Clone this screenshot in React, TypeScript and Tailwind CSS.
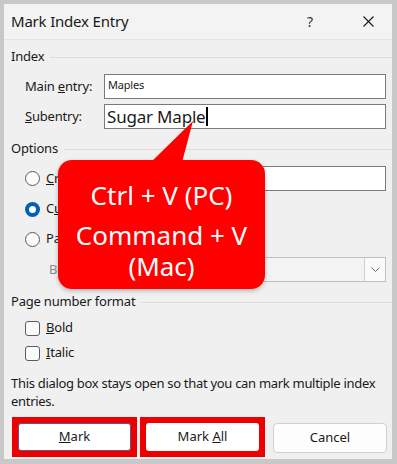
import React from 'react'

const font = { fontFamily: '"Noto Sans", "Open Sans", Arial, sans-serif' }

const GroupHeader = ({ label, className }: { label: string; className?: string }) => (
    <div className={`flex items-center h-[18px] pl-[7px] ${className ?? ''}`}>
        <span className="text-[13px] text-[#1a1a1a] pr-[6px] tracking-[-0.2px]">{label}</span>
        <div className="flex-1 h-px bg-[#dcdcdc]"></div>
    </div>
)

const Radio = ({ checked }: { checked?: boolean }) =>
    checked ? (
        <div className="w-[15px] h-[15px] rounded-full bg-[#005fb8] flex items-center justify-center shrink-0">
            <div className="w-[7px] h-[7px] rounded-full bg-white"></div>
        </div>
    ) : (
        <div className="w-[15px] h-[15px] rounded-full border border-[#5c5c5c] bg-[#fbfbfb] shrink-0"></div>
    )

const Checkbox = () => (
    <div className="w-[15px] h-[15px] rounded-[3px] border border-[#5c5c5c] bg-[#fbfbfb] shrink-0"></div>
)

const App = () => {
    return (
        <div className="w-[397px] h-[464px] bg-[#c8c8c8] pt-[4px] pl-[4px] pr-[5px] pb-[5px]" style={font}>
            <div className="relative h-full bg-[#f0f0f0] flex flex-col text-[#1a1a1a] tracking-[-0.2px]">
                {/* title bar */}
                <div className="h-[36px] bg-[#f3f3f3] border-b border-[#e6e6e6] flex items-center pl-[7px] pr-[18px] shrink-0">
                    <span className="text-[15px] flex-1">Mark Index Entry</span>
                    <span className="text-[14px] text-[#333] mr-[50px]">?</span>
                    <svg width="11" height="11" viewBox="0 0 11 11">
                        <path d="M0.5 0.5 L10.5 10.5 M10.5 0.5 L0.5 10.5" stroke="#1a1a1a" strokeWidth="1.1" />
                    </svg>
                </div>

                {/* index */}
                <GroupHeader label="Index" className="mt-[8px]" />
                <div className="flex items-center mt-[8px] h-[25px]">
                    <span className="w-[100px] pl-[21px] text-[13px]">Main <span className="underline">e</span>ntry:</span>
                    <div className="w-[282px] h-[25px] bg-white border border-[#7a7a7a] pl-[3px] text-[11px] leading-[20px]">Maples</div>
                </div>
                <div className="flex items-center mt-[5px] h-[25px]">
                    <span className="w-[100px] pl-[21px] text-[13px]"><span className="underline">S</span>ubentry:</span>
                    <div className="w-[282px] h-[25px] bg-white border border-[#7a7a7a] pl-[2px] text-[17px] leading-[22px] flex items-center">
                        Sugar Maple<span className="inline-block w-[1.5px] h-[19px] bg-black ml-px"></span>
                    </div>
                </div>

                {/* options */}
                <GroupHeader label="Options" className="mt-[11px]" />
                <div className="flex items-center mt-[8px] h-[25px] pl-[21px]">
                    <Radio />
                    <span className="text-[13px] ml-[6px] w-[105px]"><span className="underline">C</span>ross-reference:</span>
                    <div className="w-[235px] h-[25px] bg-white border border-[#7a7a7a] text-[13px] pl-[3px]">See</div>
                </div>
                <div className="flex items-center mt-[6px] h-[24px] pl-[21px]">
                    <Radio checked />
                    <span className="text-[13px] ml-[6px]">C<span className="underline">u</span>rrent page</span>
                </div>
                <div className="flex items-center mt-[6px] h-[24px] pl-[21px]">
                    <Radio />
                    <span className="text-[13px] ml-[6px]">Page ra<span className="underline">n</span>ge</span>
                </div>
                <div className="flex items-center mt-[6px] h-[25px] pl-[45px]">
                    <span className="text-[13px] text-[#8a8a8a] w-[90px]">Bookmark:</span>
                    <div className="w-[247px] h-[25px] bg-[#f3f3f3] border border-[#bfbfbf] flex justify-end">
                        <div className="w-[21px] h-full bg-[#fafafa] border-l border-[#d0d0d0] flex items-center justify-center">
                            <svg width="9" height="6" viewBox="0 0 9 6">
                                <path d="M0.5 0.5 L4.5 4.5 L8.5 0.5" fill="none" stroke="#6a6a6a" strokeWidth="1" />
                            </svg>
                        </div>
                    </div>
                </div>

                {/* page number format */}
                <GroupHeader label="Page number format" className="mt-[11px]" />
                <div className="flex items-center mt-[7px] h-[20px] pl-[21px]">
                    <Checkbox />
                    <span className="text-[13px] ml-[6px]"><span className="underline">B</span>old</span>
                </div>
                <div className="flex items-center mt-[5px] h-[20px] pl-[21px]">
                    <Checkbox />
                    <span className="text-[13px] ml-[6px]"><span className="underline">I</span>talic</span>
                </div>

                <p className="text-[13px] leading-[18px] pl-[7px] mt-[11px] whitespace-nowrap tracking-[-0.3px]">
                    This dialog box stays open so that you can mark multiple index<br />entries.
                </p>

                {/* buttons */}
                <div className="flex mt-[7px] pl-[8px] tracking-normal">
                    <div className="w-[125px] h-[40px] bg-[#ee0000] p-[6px]">
                        <div className="h-full bg-white border border-[#5a5a8a] rounded-[3px] flex items-center justify-center text-[13px]">
                            <span><span className="underline">M</span>ark</span>
                        </div>
                    </div>
                    <div className="w-[125px] h-[40px] bg-[#ee0000] p-[6px] ml-[3px]">
                        <div className="h-full bg-white rounded-[3px] flex items-center justify-center text-[13px]">
                            <span>Mark <span className="underline">A</span>ll</span>
                        </div>
                    </div>
                    <div className="w-[114px] h-[30px] mt-[6px] ml-[8px] bg-[#fdfdfd] border border-[#d0d0d0] rounded-[4px] flex items-center justify-center text-[13px]">
                        Cancel
                    </div>
                </div>

                {/* callout */}
                <svg className="absolute left-[140px] top-[116px]" width="60" height="48" viewBox="0 0 60 48">
                    <polygon points="3,46 49,1 37,46" fill="#ff0000" />
                </svg>
                <div className="absolute left-[54px] top-[156px] w-[207px] h-[129px] rounded-[14px] bg-[#ff0000] shadow-[0_2px_4px_rgba(0,0,0,0.25)] flex flex-col items-center text-white pt-[19px] tracking-normal">
                    <span className="text-[26px] leading-[32px]">Ctrl + V (PC)</span>
                    <span className="text-[26px] leading-[31px] mt-[9px]">Command + V</span>
                    <span className="text-[26px] leading-[31px]">(Mac)</span>
                </div>
            </div>
        </div>
    )
}

export default App
